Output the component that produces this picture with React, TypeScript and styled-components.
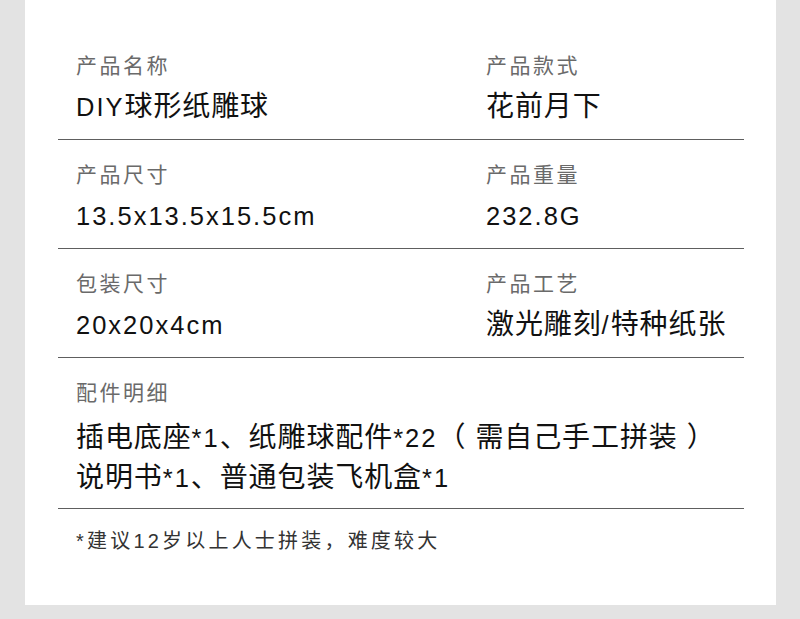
import React from "react";
import styled, { createGlobalStyle } from "styled-components";

const Global = createGlobalStyle`
  html, body { margin: 0; padding: 0; background: #e3e3e3; }
  body { font-family: "Liberation Sans", "Noto Sans CJK SC", sans-serif; }
`;

const Page = styled.div`
  width: 800px;
  height: 619px;
  background: #e3e3e3;
  padding: 0 24px 14px 25px;
  box-sizing: border-box;
  display: flex;
`;

const Card = styled.div`
  flex: 1;
  background: #ffffff;
  padding: 31px 32px 47px 33px;
  display: flex;
  flex-direction: column;
`;

const Row = styled.div`
  display: grid;
  grid-template-columns: 410px 1fr;
  padding: 20px 0 14px 18px;
  border-bottom: 1px solid #5e5e5e;
`;

const Field = styled.div<{ $gap?: number }>`
  display: flex;
  flex-direction: column;
  gap: ${(p) => p.$gap ?? 8}px;
`;

const Label = styled.div`
  font-size: 21px;
  line-height: 30px;
  letter-spacing: 2.5px;
  color: #6a6a6a;
  white-space: nowrap;
`;

const Value = styled.div<{ $lh?: number }>`
  font-size: 28px;
  line-height: ${(p) => p.$lh ?? 36}px;
  letter-spacing: 0.9px;
  color: #111111;
  white-space: nowrap;
`;

const Latin = styled.span`
  font-size: 25.5px;
  letter-spacing: 2px;
`;

const WideRow = styled(Row)`
  display: block;
  padding-bottom: 10px;
`;

const Note = styled.div`
  padding: 17px 0 0 18px;
  font-size: 20px;
  line-height: 30px;
  letter-spacing: 3.2px;
  color: #333333;
  white-space: nowrap;
`;

function Mixed({ text }: { text: string }) {
  const parts = text.split(/([\x20-\x7E]+)/).filter((s) => s.length > 0);
  return (
    <>
      {parts.map((s, i) =>
        /^[\x20-\x7E]+$/.test(s) ? <Latin key={i}>{s}</Latin> : <React.Fragment key={i}>{s}</React.Fragment>
      )}
    </>
  );
}

const items: [string, string, string, string][] = [
  ["产品名称", "DIY球形纸雕球", "产品款式", "花前月下"],
  ["产品尺寸", "13.5x13.5x15.5cm", "产品重量", "232.8G"],
  ["包装尺寸", "20x20x4cm", "产品工艺", "激光雕刻/特种纸张"],
];

export default function App() {
  return (
    <Page>
      <Global />
      <Card>
        {items.map(([l1, v1, l2, v2]) => (
          <Row key={l1}>
            <Field>
              <Label>{l1}</Label>
              <Value>
                <Mixed text={v1} />
              </Value>
            </Field>
            <Field>
              <Label>{l2}</Label>
              <Value>
                <Mixed text={v2} />
              </Value>
            </Field>
          </Row>
        ))}
        <WideRow>
          <Field $gap={10}>
            <Label>配件明细</Label>
            <Value $lh={39}>
              <Mixed text="插电底座*1、纸雕球配件*22（ 需自己手工拼装 ）" />
              <br />
              <Mixed text="说明书*1、普通包装飞机盒*1" />
            </Value>
          </Field>
        </WideRow>
        <Note>*建议12岁以上人士拼装，难度较大</Note>
      </Card>
    </Page>
  );
}
